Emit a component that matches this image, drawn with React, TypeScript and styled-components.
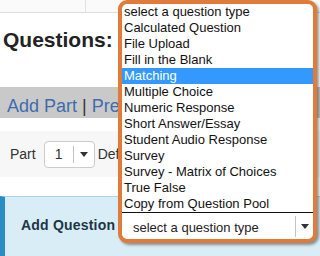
import React from 'react';
import styled, { createGlobalStyle } from 'styled-components';

const GlobalStyle = createGlobalStyle`
  html, body {
    margin: 0;
    padding: 0;
    background: #ffffff;
    font-family: "Liberation Sans", Arial, sans-serif;
    overflow: hidden;
  }
`;

const Page = styled.div`
  position: relative;
  width: 320px;
  height: 256px;
  overflow: hidden;
  background: #ffffff;
`;

const TabStrip = styled.div`
  display: flex;
  height: 12px;
  overflow: hidden;
  background: #fafafa;
  border-bottom: 1px solid #dddddd;
`;

const TabCell = styled.div<{ width: number }>`
  width: ${({ width }) => width}px;
  flex-shrink: 0;
  border-right: 1px solid #e2e2e2;
  padding-left: 4px;
  box-sizing: border-box;
`;

const TabLabel = styled.span`
  display: block;
  margin-top: -12px;
  font-size: 13px;
  line-height: 15px;
  color: #555555;
  white-space: nowrap;
`;

const Heading = styled.h1`
  margin: 15px 0 0 3px;
  font-size: 21px;
  line-height: 24px;
  font-weight: bold;
  color: #222222;
`;

const ActionBar = styled.div`
  margin-top: 35px;
  height: 31px;
  box-sizing: border-box;
  padding: 10px 0 0 7px;
  background: #c9c9c9;
  font-size: 18px;
  line-height: 18px;
  color: #333333;
  white-space: nowrap;
`;

const ActionLink = styled.a`
  color: #3f6cae;
  text-decoration: none;
`;

const PartRow = styled.div`
  margin-top: 13px;
  height: 46px;
  display: flex;
  align-items: center;
  padding-left: 10px;
  background: #f7f7f7;
  font-size: 14px;
  color: #333333;
  white-space: nowrap;
`;

const PartSelect = styled.div`
  margin: 0 3px 0 8px;
  width: 51px;
  height: 27px;
  box-sizing: border-box;
  display: flex;
  align-items: center;
  border: 1px solid #cccccc;
  border-radius: 4px;
  background: #ffffff;
`;

const PartValue = styled.span`
  width: 28px;
  text-align: center;
  font-size: 14px;
`;

const SelectDivider = styled.span<{ h: number }>`
  width: 1px;
  height: ${({ h }) => h}px;
  background: #c4c4c4;
`;

const ArrowBox = styled.span`
  flex: 1;
  display: flex;
  justify-content: center;
  align-items: center;
`;

const Arrow = styled.span`
  width: 0;
  height: 0;
  border-left: 4px solid transparent;
  border-right: 4px solid transparent;
  border-top: 5px solid #333333;
`;

const AddPanel = styled.div`
  margin-top: 19px;
  height: 80px;
  box-sizing: border-box;
  padding: 19px 0 0 16px;
  background: #d9edf7;
  border-top: 1px solid #a9d4ec;
  border-left: 5px solid #2b8cc4;
  font-size: 14px;
  line-height: 18px;
  font-weight: bold;
  letter-spacing: 0.2px;
  color: #1d3545;
`;

const Popup = styled.div`
  position: absolute;
  left: 118px;
  top: 0;
  width: 199px;
  height: 243px;
  box-sizing: border-box;
  display: flex;
  flex-direction: column;
  border: 4px solid #e07b39;
  border-radius: 9px;
  background: #ffffff;
  box-shadow: 2px 2px 3px rgba(0, 0, 0, 0.4);
  overflow: hidden;
`;

const List = styled.ul`
  margin: 0;
  padding: 0;
  list-style: none;
  border-bottom: 1px solid #111111;
`;

const Option = styled.li<{ selected?: boolean }>`
  height: 16px;
  padding-left: 2px;
  font-size: 13px;
  line-height: 16px;
  white-space: nowrap;
  color: ${({ selected }) => (selected ? '#ffffff' : '#111111')};
  background: ${({ selected }) => (selected ? '#3399ff' : 'transparent')};
`;

const TypeSelect = styled.div`
  flex: 1;
  display: flex;
  align-items: center;
  font-size: 13px;
  color: #222222;
`;

const TypeValue = styled.span`
  flex: 1;
  padding-left: 11px;
  padding-top: 2px;
  white-space: nowrap;
`;

const TypeArrow = styled.span`
  width: 17px;
  display: flex;
  justify-content: center;
  padding-top: 1px;
`;

const options = [
  'select a question type',
  'Calculated Question',
  'File Upload',
  'Fill in the Blank',
  'Matching',
  'Multiple Choice',
  'Numeric Response',
  'Short Answer/Essay',
  'Student Audio Response',
  'Survey',
  'Survey - Matrix of Choices',
  'True False',
  'Copy from Question Pool',
];

const App: React.FC = () => {
  return (
    <Page>
      <GlobalStyle />
      <TabStrip>
        <TabCell width={86}>
          <TabLabel>Assessments</TabLabel>
        </TabCell>
        <TabCell width={120}>
          <TabLabel>Assessment Types</TabLabel>
        </TabCell>
      </TabStrip>
      <Heading>Questions: Quiz 1</Heading>
      <ActionBar>
        <ActionLink href="#">Add Part</ActionLink> | <ActionLink href="#">Preview</ActionLink>
      </ActionBar>
      <PartRow>
        Part
        <PartSelect>
          <PartValue>1</PartValue>
          <SelectDivider h={17} />
          <ArrowBox>
            <Arrow />
          </ArrowBox>
        </PartSelect>
        Default Pool
      </PartRow>
      <AddPanel>Add Question</AddPanel>
      <Popup>
        <List>
          {options.map((o) => (
            <Option key={o} selected={o === 'Matching'}>
              {o}
            </Option>
          ))}
        </List>
        <TypeSelect>
          <TypeValue>select a question type</TypeValue>
          <SelectDivider h={21} />
          <TypeArrow>
            <Arrow />
          </TypeArrow>
        </TypeSelect>
      </Popup>
    </Page>
  );
};

export default App;
